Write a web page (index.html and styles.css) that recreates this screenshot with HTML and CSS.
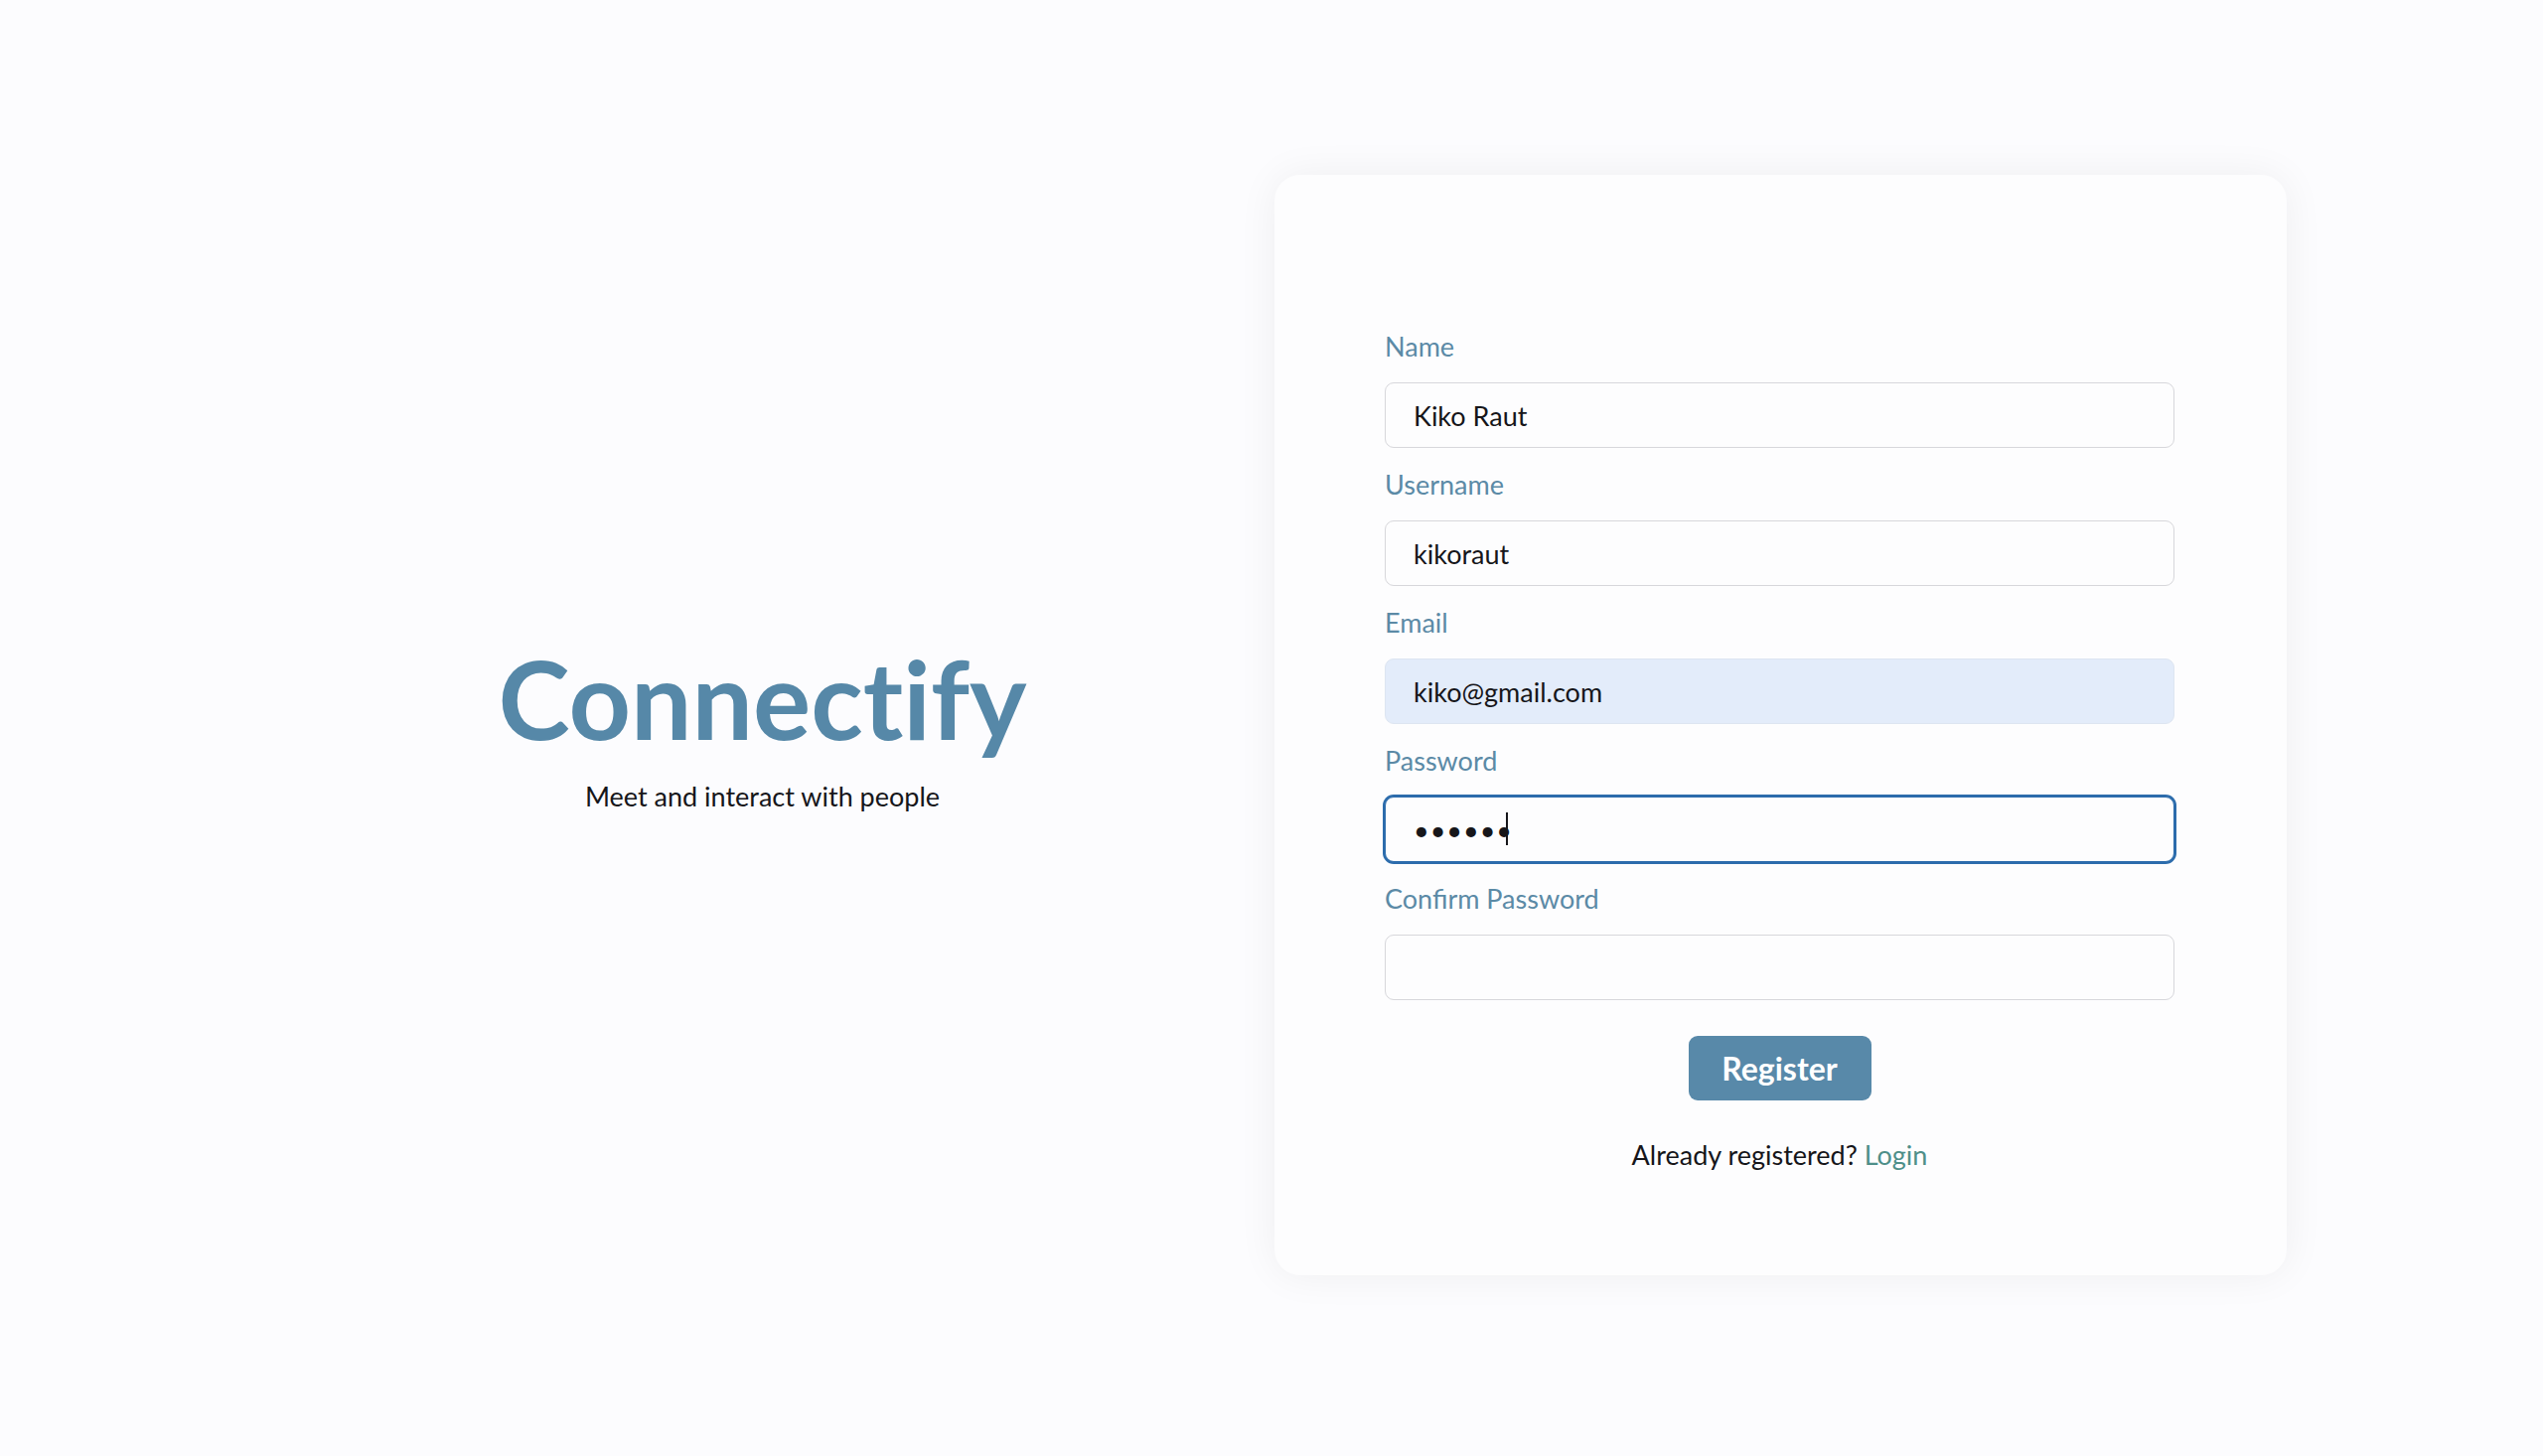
FILE: index.html
```html
<!DOCTYPE html>
<html lang="en">
<head>
<meta charset="utf-8">
<title>Connectify - Register</title>
<link rel="stylesheet" href="styles.css">
</head>
<body>
<main class="page">
  <section class="brand">
    <h1 class="brand-title">Connectify</h1>
    <p class="brand-tagline">Meet and interact with people</p>
  </section>
  <section class="card">
    <form class="form">
      <label class="label" for="name">Name</label>
      <input class="input" id="name" type="text" value="Kiko Raut">
      <label class="label" for="username">Username</label>
      <input class="input" id="username" type="text" value="kikoraut">
      <label class="label" for="email">Email</label>
      <input class="input input-autofill" id="email" type="email" value="kiko@gmail.com">
      <label class="label" for="password">Password</label>
      <div class="input-wrap">
        <input class="input input-focus" id="password" type="password" value="secret">
        <span class="caret"></span>
      </div>
      <label class="label" for="confirm">Confirm Password</label>
      <input class="input" id="confirm" type="password" value="">
      <div class="actions">
        <button class="btn" type="button">Register</button>
      </div>
      <p class="switch">Already registered? <a class="link" href="#">Login</a></p>
    </form>
  </section>
</main>
</body>
</html>
```
FILE: styles.css
```css
* { box-sizing: border-box; }
html, body { margin: 0; height: 100%; }
body {
  background: #fcfcfe;
  font-family: Lato, "Noto Sans", sans-serif;
  color: #16161a;
}
.page {
  height: 100vh;
  width: 2050px;
  margin: 0 auto;
  padding-bottom: 6px;
  display: grid;
  grid-template-columns: 1fr 1fr;
  align-items: center;
}
.brand {
  text-align: center;
  padding-bottom: 4px;
}
.brand-title {
  margin: 0;
  font-size: 109px;
  font-weight: 700;
  color: #5688a8;
  line-height: 1.2;
  font-variant-ligatures: none;
}
.brand-tagline {
  margin: 16px 0 0;
  font-size: 27px;
  color: #16161a;
}
.card {
  margin-left: 3px;
  margin-right: 3px;
  background: #fdfdfe;
  border-radius: 26px;
  box-shadow: 0 0 40px rgba(0, 0, 0, 0.06);
  padding: 156px 113px 104px 111px;
}
.form {
  display: flex;
  flex-direction: column;
}
.label {
  font-size: 27px;
  line-height: 34px;
  color: #5b8aa6;
  margin-bottom: 19px;
}
.input {
  display: block;
  width: 100%;
  height: 66px;
  border: 1px solid #d7d7db;
  border-radius: 9px;
  background: #fdfdfe;
  padding: 0 28px;
  font-family: Lato, "Noto Sans", sans-serif;
  font-size: 27px;
  color: #16161a;
  margin-bottom: 20px;
  outline: none;
}
.input-autofill {
  background: #e3ecfa;
  border-color: #dde5f1;
}
.input-wrap {
  position: relative;
  margin-bottom: 20px;
}
.input-wrap .input { margin-bottom: 0; }
.input-focus {
  border: 1px solid #2c6cac;
  box-shadow: 0 0 0 2px #2c6cac;
  letter-spacing: 1px;
}
.caret {
  position: absolute;
  left: 122px;
  top: 16px;
  width: 2px;
  height: 33px;
  background: #16161a;
}
.actions {
  display: flex;
  justify-content: center;
  margin-top: 16px;
}
.btn {
  width: 184px;
  height: 65px;
  border: 0;
  border-radius: 9px;
  background: #5889a9;
  color: #fff;
  font-family: Lato, "Noto Sans", sans-serif;
  font-size: 32px;
  font-weight: 700;
  cursor: pointer;
}
.switch {
  margin: 38px 0 0;
  text-align: center;
  font-size: 27px;
  line-height: 34px;
  color: #16161a;
}
.link {
  color: #4e8f89;
  text-decoration: none;
}
```
